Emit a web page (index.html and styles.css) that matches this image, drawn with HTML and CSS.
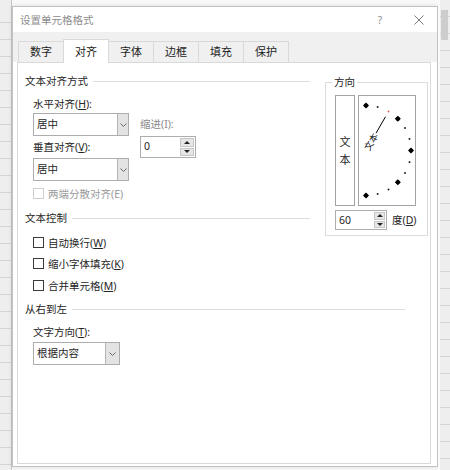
FILE: index.html
```html
<!DOCTYPE html>
<html lang="zh-CN">
<head>
    <meta charset="UTF-8">
    <title>设置单元格格式</title>
    <link rel="stylesheet" href="styles.css">
</head>
<body>
    <div class="screen">
        <div class="sheet sheet-left"></div>

        <div class="dialog">
            <div class="titlebar">
                <span class="title">设置单元格格式</span>
                <span class="help">?</span>
                <svg class="close" width="10" height="10" viewBox="0 0 10 10">
                    <path d="M0.5 0.5 L9.5 9.5 M9.5 0.5 L0.5 9.5" stroke="#7a7a7a" stroke-width="1" fill="none"/>
                </svg>
            </div>

            <div class="tabs">
                <div class="tab">数字</div>
                <div class="tab active">对齐</div>
                <div class="tab">字体</div>
                <div class="tab">边框</div>
                <div class="tab">填充</div>
                <div class="tab">保护</div>
            </div>

            <div class="panel">
                <div class="top-row">
                    <div class="left-col">
                        <div class="group-title">文本对齐方式</div>
                        <div class="align-block">
                            <div class="align-fields">
                                <div class="label">水平对齐(<u>H</u>):</div>
                                <div class="select sel-align">
                                    <span class="value">居中</span>
                                    <span class="drop"><svg width="7" height="4" viewBox="0 0 7 4"><path d="M0.5 0.5 L3.5 3.5 L6.5 0.5" stroke="#666" fill="none"/></svg></span>
                                </div>
                                <div class="label gap-label">垂直对齐(<u>V</u>):</div>
                                <div class="select sel-align sel-second">
                                    <span class="value">居中</span>
                                    <span class="drop"><svg width="7" height="4" viewBox="0 0 7 4"><path d="M0.5 0.5 L3.5 3.5 L6.5 0.5" stroke="#666" fill="none"/></svg></span>
                                </div>
                            </div>
                            <div class="indent">
                                <div class="label muted">缩进(I):</div>
                                <div class="spin spin-indent">
                                    <span class="value">0</span>
                                    <span class="spin-btns"><i class="up"></i><i class="down"></i></span>
                                </div>
                            </div>
                        </div>
                        <div class="check disabled check-first"><span class="box"></span><span>两端分散对齐(E)</span></div>

                        <div class="group-title control-title">文本控制</div>
                        <div class="check check-wrap"><span class="box"></span><span>自动换行(<u>W</u>)</span></div>
                        <div class="check check-shrink"><span class="box"></span><span>缩小字体填充(<u>K</u>)</span></div>
                        <div class="check check-merge"><span class="box"></span><span>合并单元格(<u>M</u>)</span></div>
                    </div>

                    <fieldset class="orient">
                        <legend>方向</legend>
                        <div class="orient-boxes">
                            <div class="vtext"><span>文</span><span>本</span></div>
                            <svg class="dial" width="58" height="111" viewBox="0 0 58 111">
                                <rect x="0.5" y="0.5" width="57" height="110" fill="#fff" stroke="#a3a3a3"/>
                                <g fill="#000">
                                    <path d="M8 7.5 L11 10.5 L8 13.5 L5 10.5 Z"/>
                                    <path d="M39.8 20.7 L42.8 23.7 L39.8 26.7 L36.8 23.7 Z"/>
                                    <path d="M53 52.5 L56 55.5 L53 58.5 L50 55.5 Z"/>
                                    <path d="M39.8 84.3 L42.8 87.3 L39.8 90.3 L36.8 87.3 Z"/>
                                    <path d="M8 97.5 L11 100.5 L8 103.5 L5 100.5 Z"/>
                                    <circle cx="8" cy="10.5" r="2"/>
                                    <circle cx="39.8" cy="23.7" r="2"/>
                                    <circle cx="53" cy="55.5" r="2"/>
                                    <circle cx="39.8" cy="87.3" r="2"/>
                                    <circle cx="8" cy="100.5" r="2"/>
                                    <rect x="18.8" y="11.2" width="1.6" height="1.6"/>
                                    <rect x="46.2" y="32.2" width="1.6" height="1.6"/>
                                    <rect x="50.7" y="43.1" width="1.6" height="1.6"/>
                                    <rect x="50.7" y="66.3" width="1.6" height="1.6"/>
                                    <rect x="46.2" y="77.2" width="1.6" height="1.6"/>
                                    <rect x="29.7" y="93.7" width="1.6" height="1.6"/>
                                    <rect x="18.8" y="98.2" width="1.6" height="1.6"/>
                                </g>
                                <rect x="29.7" y="15.7" width="1.6" height="1.6" fill="#d9534f"/>
                                <path d="M18 38.2 L27.5 21.7" stroke="#000" stroke-width="1"/>
                                <text transform="translate(8 55.5) rotate(-60)" x="1" y="3.4" font-size="9" font-family="Noto Sans CJK SC, sans-serif" fill="#111">文本</text>
                            </svg>
                        </div>
                        <div class="deg-row">
                            <div class="spin spin-deg">
                                <span class="value">60</span>
                                <span class="spin-btns"><i class="up"></i><i class="down"></i></span>
                            </div>
                            <span class="label">度(<u>D</u>)</span>
                        </div>
                    </fieldset>
                </div>

                <div class="group-title rtl-title">从右到左</div>
                <div class="label direction-label">文字方向(<u>T</u>):</div>
                <div class="select sel-direction">
                    <span class="value">根据内容</span>
                    <span class="drop"><svg width="7" height="4" viewBox="0 0 7 4"><path d="M0.5 0.5 L3.5 3.5 L6.5 0.5" stroke="#666" fill="none"/></svg></span>
                </div>
            </div>
        </div>

        <div class="sheet sheet-right"></div>
    </div>
</body>
</html>
```

FILE: styles.css
```css
* {
    margin: 0;
    padding: 0;
    box-sizing: border-box;
}

body {
    width: 450px;
    height: 470px;
    overflow: hidden;
    background: #f8f8f8;
    font-family: "Noto Sans", "Noto Sans CJK SC", sans-serif;
    font-size: 10.5px;
    color: #262626;
}

u {
    text-decoration: underline;
    text-underline-offset: 1px;
}

.screen {
    display: flex;
    height: 470px;
}

/* spreadsheet behind the dialog */
.sheet {
    width: 12px;
    flex: none;
    background-color: #eeeeee;
    background-image: repeating-linear-gradient(to bottom, transparent 0 16px, #d4d4d4 16px 17px);
}

.sheet-left {
    border-right: 1px solid #c6c6c6;
    background-position: 0 6px;
}

.sheet-right {
    border-left: 2px solid #fafafa;
    background-image:
        linear-gradient(#cdcdcd, #cdcdcd),
        repeating-linear-gradient(to bottom, transparent 0 16px, #d4d4d4 16px 17px);
    background-size: 7px 30px, auto;
    background-position: 1px 10px, 0 0;
    background-repeat: no-repeat, repeat;
}

.dialog {
    width: 426px;
    height: 461px;
    margin-top: 6px;
    border: 1px solid #c2c2c2;
    background: #fff;
    display: flex;
    flex-direction: column;
    box-shadow: 0 0 4px rgba(0, 0, 0, 0.12);
}

.titlebar {
    height: 25px;
    display: flex;
    align-items: center;
    padding-left: 7px;
    flex: none;
}

.title {
    color: #8c8c8c;
    font-size: 10.5px;
}

.help {
    margin-left: auto;
    margin-right: 32px;
    color: #8c8c8c;
    font-size: 10px;
}

.close {
    margin-right: 13px;
}

.tabs {
    height: 30px;
    flex: none;
    background: #f0f0f0;
    display: flex;
    align-items: flex-end;
    padding-left: 5px;
}

.tab {
    height: 21px;
    line-height: 20px;
    padding: 0 11px;
    font-size: 11px;
    border: 1px solid #d9d9d9;
    border-bottom: none;
    margin-right: -1px;
    color: #222;
}

.tab.active {
    height: 24px;
    line-height: 23px;
    background: #fff;
    margin-bottom: -1px;
    position: relative;
    z-index: 1;
}

.panel {
    flex: 1;
    margin: 0 6px 2px 4px;
    border: 1px solid #d9d9d9;
    padding: 10px 0 0 7px;
}

.top-row {
    display: flex;
    align-items: flex-start;
}

.left-col {
    width: 300px;
}

.group-title {
    display: flex;
    align-items: center;
    height: 16px;
    line-height: 16px;
    margin-right: 15px;
}

.group-title::after {
    content: "";
    flex: 1;
    height: 1px;
    background: #dedede;
    margin-left: 5px;
}

.label {
    height: 16px;
    line-height: 16px;
}

.muted {
    color: #8a8a8a;
}

.align-block {
    display: flex;
    margin: 7px 0 0 8px;
}

.align-fields {
    width: 96px;
}

.gap-label {
    margin-top: 3px;
}

.select {
    display: flex;
    height: 23px;
    border: 1px solid #adadad;
    background: #fff;
}

.select .value {
    flex: 1;
    line-height: 21px;
    padding-left: 3px;
}

.select .drop {
    width: 11px;
    border-left: 1px solid #b4b4b4;
    background: #e3e3e3;
    display: flex;
    align-items: center;
    justify-content: center;
}

.sel-align {
    margin-top: 1px;
}

.sel-second {
    margin-top: 3px;
}

.indent {
    margin: 20px 0 0 11px;
}

.spin {
    display: flex;
    border: 1px solid #adadad;
    background: #fff;
}

.spin .value {
    flex: 1;
    padding-left: 3px;
}

.spin-btns {
    width: 14px;
    margin: 1px;
    display: flex;
    flex-direction: column;
    gap: 1px;
}

.spin-btns i {
    flex: 1;
    background: #e6e6e6;
    border: 1px solid #c6c6c6;
    display: flex;
    align-items: center;
    justify-content: center;
}

.spin-btns i::before {
    content: "";
    border-left: 3px solid transparent;
    border-right: 3px solid transparent;
}

.spin-btns .up::before {
    border-bottom: 3px solid #222;
}

.spin-btns .down::before {
    border-top: 3px solid #222;
}

.spin-indent {
    width: 56px;
    height: 22px;
    margin-top: 4px;
}

.spin-indent .value {
    line-height: 18px;
}

.check {
    display: flex;
    align-items: center;
    gap: 4px;
    height: 16px;
    margin-left: 8px;
}

.check .box {
    width: 11px;
    height: 11px;
    border: 1px solid #3a3a3a;
    background: #fff;
}

.check.disabled {
    color: #9a9a9a;
}

.check.disabled .box {
    border-color: #cfcfcf;
}

.check-first {
    margin-top: 4px;
}

.control-title {
    margin-top: 9px;
}

.check-wrap {
    margin-top: 8px;
}

.check-shrink {
    margin-top: 5px;
}

.check-merge {
    margin-top: 6px;
}

/* orientation group */
.orient {
    width: 103px;
    margin-top: 1px;
    border: 1px solid #dcdcdc;
    padding: 0 0 5px 9px;
}

.orient legend {
    line-height: 16px;
    padding: 0 2px;
    margin-left: -3px;
}

.orient-boxes {
    display: flex;
    gap: 3px;
    margin-top: 5px;
}

.vtext {
    width: 20px;
    height: 111px;
    border: 1px solid #a3a3a3;
    display: flex;
    flex-direction: column;
    align-items: center;
    justify-content: center;
    font-size: 11px;
    line-height: 18px;
}

.dial {
    display: block;
}

.deg-row {
    display: flex;
    align-items: center;
    gap: 5px;
    margin-top: 4px;
}

.spin-deg {
    width: 52px;
    height: 20px;
}

.spin-deg .value {
    line-height: 18px;
}

.spin-deg .spin-btns {
    width: 11px;
}

.rtl-title {
    width: 380px;
    margin-top: 8px;
}

.direction-label {
    margin: 7px 0 0 8px;
}

.sel-direction {
    width: 87px;
    margin: 2px 0 0 8px;
}

.sel-direction .drop {
    width: 14px;
}
```
